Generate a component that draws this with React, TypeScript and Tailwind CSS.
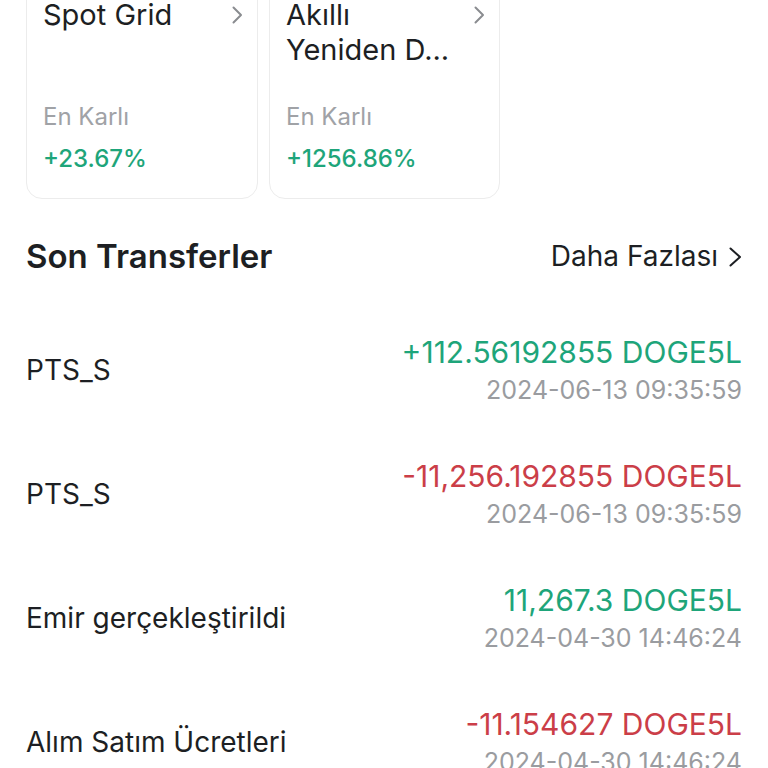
const GREEN = 'text-[#1ea57a]'
const RED = 'text-[#cb3e48]'

type Transfer = { label: string; amount: string; up: boolean; time: string }

const transfers: Transfer[] = [
  { label: 'PTS_S', amount: '+112.56192855 DOGE5L', up: true, time: '2024-06-13 09:35:59' },
  { label: 'PTS_S', amount: '-11,256.192855 DOGE5L', up: false, time: '2024-06-13 09:35:59' },
  { label: 'Emir gerçekleştirildi', amount: '11,267.3 DOGE5L', up: true, time: '2024-04-30 14:46:24' },
  { label: 'Alım Satım Ücretleri', amount: '-11.154627 DOGE5L', up: false, time: '2024-04-30 14:46:24' },
]

function Chevron({ className, w = 11, h = 18 }: { className?: string; w?: number; h?: number }) {
  return (
    <svg width={w} height={h} viewBox={`0 0 ${w} ${h}`} fill="none" className={className}>
      <path
        d={`M1.5 1.5 L${w - 2} ${h / 2} L1.5 ${h - 1.5}`}
        stroke="currentColor"
        strokeWidth={2}
        strokeLinecap="round"
        strokeLinejoin="round"
      />
    </svg>
  )
}

function BotCard({ title, profit }: { title: string; profit: string }) {
  return (
    <div className="flex h-[219px] flex-col rounded-[16px] border border-[#ececec] pb-[24px] pl-4 pr-[14px] pt-[16px]">
      <div className="flex items-start justify-between gap-2">
        <div className="line-clamp-2 text-[29px] leading-[35px] text-[#1d1f23]">{title}</div>
        <Chevron className="mt-[9px] shrink-0 text-[#8a8c90]" />
      </div>
      <div className="mt-auto text-[24px] leading-[30px] text-[#a0a2a6]">En Karlı</div>
      <div className={`mt-[12px] text-[24px] font-medium leading-[30px] ${GREEN}`}>{profit}</div>
    </div>
  )
}

export default function App() {
  return (
    <div className="h-[768px] overflow-hidden bg-white font-['Inter',sans-serif]">
      <div className="-mt-[20px] grid grid-cols-[232px_231px] gap-[11px] pl-[26px]">
        <BotCard title="Spot Grid" profit="+23.67%" />
        <BotCard title="Akıllı Yeniden D..." profit="+1256.86%" />
      </div>

      <div className="mt-[37px] flex items-center justify-between px-[26px]">
        <h2 className="text-[33px] font-semibold leading-[40px] text-[#1d1f23]">Son Transferler</h2>
        <div className="flex items-center gap-[11px] text-[28px] leading-[36px] text-[#1d1f23]">
          Daha Fazlası
          <Chevron w={13} h={20} className="mt-[2px]" />
        </div>
      </div>

      <div className="mt-[32px] px-[26px]">
        {transfers.map((t, i) => (
          <div key={i} className="flex h-[124px] items-center justify-between">
            <div className="text-[28px] leading-[34px] text-[#1d1f23]">{t.label}</div>
            <div className="text-right">
              <div className={`text-[30px] leading-[34px] ${t.up ? GREEN : RED}`}>{t.amount}</div>
              <div className="mt-[6px] text-[25px] leading-[30px] text-[#9a9ca0]">{t.time}</div>
            </div>
          </div>
        ))}
      </div>
    </div>
  )
}
